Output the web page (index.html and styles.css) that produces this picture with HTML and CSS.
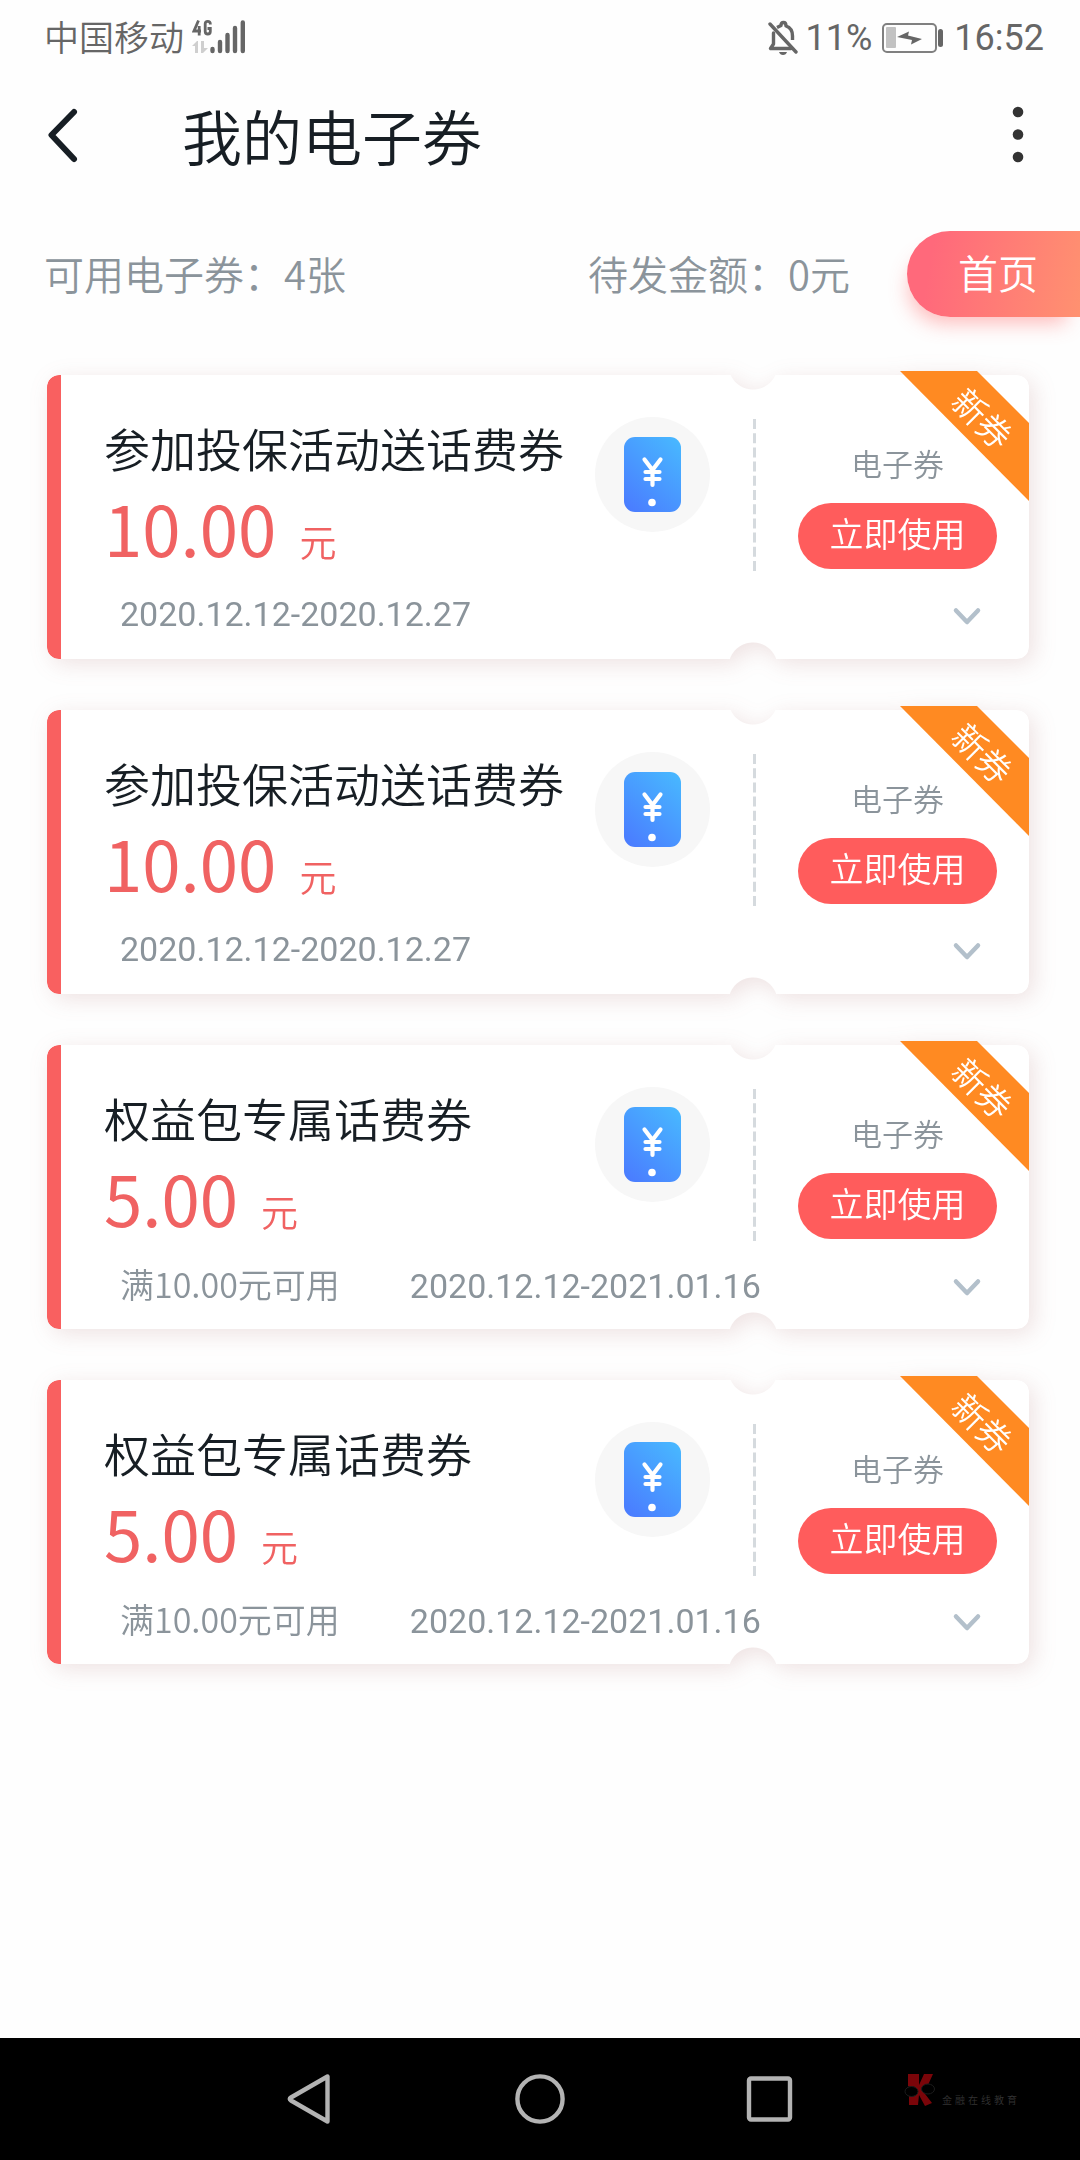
FILE: index.html
```html
<!DOCTYPE html>
<html lang="zh-CN">
<head>
<meta charset="utf-8">
<meta name="viewport" content="width=device-width, initial-scale=1">
<title>我的电子券</title>
<link rel="stylesheet" href="styles.css">
</head>
<body>
<svg class="defs" aria-hidden="true">
  <defs>
    <linearGradient id="phone-fill" x1="0.85" y1="0" x2="0.15" y2="1">
      <stop offset="0" stop-color="#48b6ff"/>
      <stop offset="1" stop-color="#4a7dff"/>
    </linearGradient>
    <symbol id="phone" viewBox="0 0 115 115">
      <circle cx="57.500" cy="57.500" r="57.500" fill="#f7f7f7"/>
      <rect x="29" y="20" width="57" height="75" rx="11" fill="url(#phone-fill)"/>
      <path d="M49.500 42.500 57.500 53 65.500 42.500M57.500 53V68M50.500 55H64.500M50.500 62H64.500" fill="none" stroke="#fff" stroke-width="4.200" stroke-linecap="round" stroke-linejoin="round"/>
      <circle cx="57" cy="85.500" r="3.800" fill="#fff"/>
    </symbol>
    <symbol id="chevron" viewBox="0 0 32 24">
      <path d="M5 5.500 16 17 27 5.500" fill="none" stroke="#b3c0cb" stroke-width="4.500" stroke-linecap="round" stroke-linejoin="round"/>
    </symbol>
  </defs>
</svg>

<div class="screen">
  <div class="status">
    <div class="status-group">
      <span class="carrier">中国移动</span>
      <svg class="signal" width="54" height="36" viewBox="0 0 54 36" role="img" aria-label="4G">
        <g fill="none" stroke="#666" stroke-width="2.800">
          <path d="M6.500 1.500 2 12H9M7.200 7V16.500"/>
          <path d="M18.300 5.500V4.800Q18.300 2.400 15.800 2.400 13.200 2.400 13.200 4.800V12.500Q13.200 15 15.800 15 18.300 15 18.300 12.500V9.500H15.500"/>
        </g>
        <path d="M0 27 5 22H6V34H3V27ZM9 22H12V29H16L11 34H9Z" fill="#cfcfcf"/>
        <g stroke="#666" stroke-width="4.400" stroke-linecap="round">
          <path d="M20.500 30V32M28 23V32M35.500 16V32M43 9V32M50.800 3.500V32"/>
        </g>
      </svg>
    </div>
    <div class="status-group status-right">
      <svg width="30" height="36" viewBox="0 0 30 36" role="img" aria-label="静音">
        <g fill="none" stroke="#666" stroke-width="3.400" stroke-linecap="round" stroke-linejoin="round">
          <path d="M2 4 28 32"/>
          <path d="M5.500 13V24L2.500 28.500H23"/>
          <path d="M9 7.500Q12 6 13 5.500 13 2.500 15.500 2.500 18 2.500 18 6 24.500 8 24.500 16V20" stroke-linecap="butt"/>
        </g>
        <path d="M11 32H19Q18 35 15 35 12 35 11 32Z" fill="#666"/>
      </svg>
      <span class="battery-level">11%</span>
      <svg class="battery" width="62" height="32" viewBox="0 0 62 32" role="img" aria-label="充电中">
        <rect x="1" y="2" width="53" height="28" rx="4" fill="none" stroke="#808080" stroke-width="2"/>
        <rect x="4" y="5" width="10" height="21" rx="1" fill="#c2c2c2"/>
        <path d="M15 15 27 9.500 26 13.500 40 17 29 22.500 30 18Z" fill="#666"/>
        <rect x="56" y="7" width="5" height="18" rx="2.500" fill="#666"/>
      </svg>
      <span>16:52</span>
    </div>
  </div>

  <header class="header">
    <button class="icon-button" type="button" aria-label="返回">
      <svg width="34" height="60" viewBox="0 0 34 60"><path d="M28 7 5.500 30 28 54" fill="none" stroke="#171e24" stroke-width="6" stroke-linecap="round" stroke-linejoin="round"/></svg>
    </button>
    <h1 class="title">我的电子券</h1>
    <button class="icon-button" type="button" aria-label="更多">
      <svg width="12" height="60" viewBox="0 0 12 60" fill="#333"><circle cx="6" cy="7" r="5.300"/><circle cx="6" cy="29.500" r="5.300"/><circle cx="6" cy="52" r="5.300"/></svg>
    </button>
  </header>

  <div class="summary">
    <span class="total">可用电子券：4张</span>
    <span class="total pending">待发金额：0元</span>
    <a class="home" href="#">首页</a>
  </div>

  <main>
    <ul class="coupons">
      <li class="coupon">
        <div class="paper"></div>
        <div class="body">
          <div class="info">
            <h2 class="name">参加投保活动送话费券</h2>
            <p class="price">10.00<span class="unit">元</span></p>
          </div>
          <svg class="phone"><use href="#phone"/></svg>
          <svg class="divider" width="3" height="152"><path d="M1.500 0V152" stroke="#d5dade" stroke-width="3" stroke-dasharray="10 4.200"/></svg>
          <div class="action">
            <span class="kind">电子券</span>
            <button class="use" type="button">立即使用</button>
          </div>
        </div>
        <div class="foot">
          <span class="date">2020.12.12-2020.12.27</span>
          <button class="more" type="button" aria-label="展开"><svg width="32" height="24"><use href="#chevron"/></svg></button>
        </div>
        <div class="ribbon"><span class="ribbon-text">新券</span></div>
      </li>
      <li class="coupon">
        <div class="paper"></div>
        <div class="body">
          <div class="info">
            <h2 class="name">参加投保活动送话费券</h2>
            <p class="price">10.00<span class="unit">元</span></p>
          </div>
          <svg class="phone"><use href="#phone"/></svg>
          <svg class="divider" width="3" height="152"><path d="M1.500 0V152" stroke="#d5dade" stroke-width="3" stroke-dasharray="10 4.200"/></svg>
          <div class="action">
            <span class="kind">电子券</span>
            <button class="use" type="button">立即使用</button>
          </div>
        </div>
        <div class="foot">
          <span class="date">2020.12.12-2020.12.27</span>
          <button class="more" type="button" aria-label="展开"><svg width="32" height="24"><use href="#chevron"/></svg></button>
        </div>
        <div class="ribbon"><span class="ribbon-text">新券</span></div>
      </li>
      <li class="coupon">
        <div class="paper"></div>
        <div class="body">
          <div class="info">
            <h2 class="name">权益包专属话费券</h2>
            <p class="price">5.00<span class="unit">元</span></p>
          </div>
          <svg class="phone"><use href="#phone"/></svg>
          <svg class="divider" width="3" height="152"><path d="M1.500 0V152" stroke="#d5dade" stroke-width="3" stroke-dasharray="10 4.200"/></svg>
          <div class="action">
            <span class="kind">电子券</span>
            <button class="use" type="button">立即使用</button>
          </div>
        </div>
        <div class="foot">
          <span class="condition">满10.00元可用</span>
          <span class="date">2020.12.12-2021.01.16</span>
          <button class="more" type="button" aria-label="展开"><svg width="32" height="24"><use href="#chevron"/></svg></button>
        </div>
        <div class="ribbon"><span class="ribbon-text">新券</span></div>
      </li>
      <li class="coupon">
        <div class="paper"></div>
        <div class="body">
          <div class="info">
            <h2 class="name">权益包专属话费券</h2>
            <p class="price">5.00<span class="unit">元</span></p>
          </div>
          <svg class="phone"><use href="#phone"/></svg>
          <svg class="divider" width="3" height="152"><path d="M1.500 0V152" stroke="#d5dade" stroke-width="3" stroke-dasharray="10 4.200"/></svg>
          <div class="action">
            <span class="kind">电子券</span>
            <button class="use" type="button">立即使用</button>
          </div>
        </div>
        <div class="foot">
          <span class="condition">满10.00元可用</span>
          <span class="date">2020.12.12-2021.01.16</span>
          <button class="more" type="button" aria-label="展开"><svg width="32" height="24"><use href="#chevron"/></svg></button>
        </div>
        <div class="ribbon"><span class="ribbon-text">新券</span></div>
      </li>
    </ul>
  </main>

  <nav class="navbar" aria-label="系统导航">
    <button class="icon-button" type="button" aria-label="后退">
      <svg width="50" height="56" viewBox="0 0 50 56"><path d="M42.500 5.500V50.500L6 29.500Q3.500 28 6 26.500Z" fill="none" stroke="#b3b3b3" stroke-width="4.400" stroke-linejoin="round"/></svg>
    </button>
    <button class="icon-button" type="button" aria-label="主屏幕">
      <svg width="50" height="56" viewBox="0 0 50 56"><circle cx="25" cy="28" r="22.600" fill="none" stroke="#b3b3b3" stroke-width="4.400"/></svg>
    </button>
    <button class="icon-button" type="button" aria-label="最近任务">
      <svg width="50" height="56" viewBox="0 0 50 56"><rect x="4" y="7.500" width="41" height="41" rx="2" fill="none" stroke="#b3b3b3" stroke-width="4.400"/></svg>
    </button>
    <div class="brand">
      <svg width="32" height="34" viewBox="0 0 32 34">
        <path d="M4 1H15V12L20 1H29L24 12 18 17 28 30 21 33 15 22 14 32H5V22L9 16 4 13Z" fill="#7a0509"/>
        <ellipse cx="7.500" cy="18.500" rx="6.500" ry="5" fill="#000" stroke="#1c1c1c"/>
        <ellipse cx="24" cy="16" rx="6.500" ry="5" fill="#000" stroke="#1c1c1c"/>
      </svg>
      <span class="brand-name">金融在线教育</span>
    </div>
  </nav>
</div>
</body>
</html>
```
FILE: styles.css
```css
* {
  box-sizing: border-box;
}

body {
  margin: 0;
  background: #fefefe;
  color: #171e24;
  font-family: "Noto Sans CJK SC", sans-serif;
  font-weight: 350;
}

h1, h2, p, ul {
  margin: 0;
  padding: 0;
  font-weight: inherit;
}

button {
  margin: 0;
  padding: 0;
  border: 0;
  background: none;
  font-family: inherit;
  font-weight: inherit;
}

svg {
  display: block;
  flex: none;
}

.defs {
  position: absolute;
  width: 0;
  height: 0;
}

.screen {
  display: flex;
  flex-direction: column;
  min-height: 100vh;
}

/* Status bar */
.status {
  display: flex;
  align-items: center;
  justify-content: space-between;
  height: 74px;
  padding: 0 36px 0 44px;
  color: #666;
  font-size: 35px;
  line-height: 40px;
}

.status-group {
  display: flex;
  align-items: center;
  gap: 8px;
}

.carrier {
  padding-bottom: 2px;
}

.status-right {
  padding-top: 1px;
  font-family: Roboto, sans-serif;
  font-size: 36px;
  font-weight: 400;
}

.battery {
  margin: 0 2px;
}

/* Title bar */
.header {
  display: flex;
  align-items: center;
  height: 122px;
  padding: 0 56px 0 46px;
}

.title {
  flex: 1;
  margin-left: 102px;
  font-size: 60px;
  line-height: 80px;
}

/* Totals */
.summary {
  display: flex;
  align-items: center;
  margin: 35px 0 58px;
  padding-left: 44px;
  color: #8b949b;
  font-size: 40px;
  line-height: 60px;
}

.total {
  padding-bottom: 3px;
}

.pending {
  margin-left: auto;
}

.home {
  width: 173px;
  height: 86px;
  margin-left: 57px;
  padding-left: 51px;
  border-radius: 43px 0 0 43px;
  background: linear-gradient(100deg, #ff697b 15%, #ff9170);
  box-shadow: -6px 14px 20px -8px rgba(255, 105, 105, 0.45);
  color: #fff;
  line-height: 82px;
  text-decoration: none;
}

/* Coupons */
.coupons {
  display: flex;
  flex-direction: column;
  gap: 51px;
  padding: 0 51px 60px 47px;
  list-style: none;
}

.coupon {
  position: relative;
  min-height: 284px;
  filter: drop-shadow(5px 5px 11px rgba(150, 70, 70, 0.15));
}

.paper {
  position: absolute;
  inset: 0;
  border-radius: 12px;
  background: linear-gradient(90deg, #f96060 14px, #fff 14px);
  -webkit-mask:
    radial-gradient(circle at calc(100% - 276px) -10px, transparent 24px, #000 25px) top / 100% 50% no-repeat,
    radial-gradient(circle at calc(100% - 276px) calc(100% + 8px), transparent 24px, #000 25px) bottom / 100% 50% no-repeat;
  mask:
    radial-gradient(circle at calc(100% - 276px) -10px, transparent 24px, #000 25px) top / 100% 50% no-repeat,
    radial-gradient(circle at calc(100% - 276px) calc(100% + 8px), transparent 24px, #000 25px) bottom / 100% 50% no-repeat;
}

.body {
  position: relative;
  display: flex;
  align-items: flex-start;
  padding: 41px 32px 0 57px;
}

.info {
  flex: 1;
}

.name {
  font-size: 46px;
  line-height: 62px;
}

.price {
  height: 96px;
  color: #f06262;
  font-size: 69px;
  font-weight: 400;
  line-height: 98px;
}

.unit {
  margin-left: 23px;
  font-size: 37px;
  font-weight: 350;
}

.phone {
  width: 115px;
  height: 115px;
  margin-top: 1px;
}

.divider {
  margin: 3px 42px 0 43px;
}

.action {
  display: flex;
  flex-direction: column;
  align-items: center;
  gap: 20px;
  padding-top: 27px;
}

.kind {
  color: #8b949b;
  font-size: 31px;
  line-height: 40px;
}

.use {
  width: 199px;
  height: 66px;
  padding-bottom: 6px;
  border-radius: 33px;
  background: #ff5c5c;
  color: #fff;
  font-size: 34px;
  line-height: 60px;
}

.foot {
  position: relative;
  display: flex;
  align-items: baseline;
  gap: 70px;
  margin-top: 20px;
  padding: 0 46px 0 73px;
  color: #8b949b;
  font-size: 34px;
  line-height: 40px;
}

.date {
  font-family: Roboto, sans-serif;
  font-weight: 400;
}

.more {
  align-self: center;
  margin-left: auto;
  padding-top: 6px;
}

.ribbon {
  position: absolute;
  top: -4px;
  right: 0;
  display: flex;
  align-items: center;
  justify-content: center;
  width: 129px;
  height: 130px;
  padding: 0 0 36px 36px;
  background: #ff8a22;
  clip-path: polygon(0 0, 77px 0, 129px 52px, 129px 130px);
  color: #fff;
  font-size: 34px;
  line-height: 40px;
}

.ribbon-text {
  transform: rotate(45deg);
  white-space: nowrap;
}

/* System navigation */
.navbar {
  position: relative;
  display: flex;
  align-items: center;
  justify-content: center;
  gap: 180px;
  height: 122px;
  margin-top: auto;
  background: #000;
}

.brand {
  position: absolute;
  right: 60px;
  bottom: 53px;
  display: flex;
  align-items: flex-end;
  gap: 6px;
}

.brand-name {
  color: #333;
  font-size: 10px;
  line-height: 14px;
  letter-spacing: 3px;
}
```
